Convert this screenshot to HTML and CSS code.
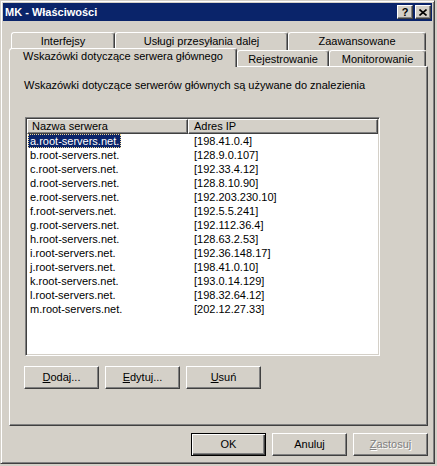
FILE: index.html
```html
<!DOCTYPE html>
<html lang="pl">
<head>
<meta charset="utf-8">
<title>MK - Właściwości</title>
<link rel="stylesheet" href="styles.css">
</head>
<body>
<div class="window">
  <div class="titlebar">
    <span class="title">MK - Właściwości</span>
    <div class="tbtns">
      <span class="tbtn help">?</span>
      <span class="tbtn close"><svg width="8" height="7" viewBox="0 0 8 7"><path d="M0.5 0.5 L7.5 6.5 M7.5 0.5 L0.5 6.5" stroke="#000" stroke-width="1.6" fill="none"/></svg></span>
    </div>
  </div>
  <div class="client">
    <div class="tabs">
      <div class="tabrow back">
        <div class="tab w1">Interfejsy</div>
        <div class="tab w2">Usługi przesyłania dalej</div>
        <div class="tab w3">Zaawansowane</div>
      </div>
      <div class="tabrow front">
        <div class="tab sel w4">Wskazówki dotyczące serwera głównego</div>
        <div class="tab w5">Rejestrowanie</div>
        <div class="tab w6">Monitorowanie</div>
      </div>
    </div>
    <div class="panel">
      <p class="desc">Wskazówki dotyczące serwerów głównych są używane do znalezienia</p>
      <div class="list">
        <div class="lhead">
          <div class="hcell c1">Nazwa serwera</div>
          <div class="hcell c2">Adres IP</div>
        </div>
        <div class="lbody">
          <div class="row selected"><div class="name"><span>a.root-servers.net.</span></div><div class="ip">[198.41.0.4]</div></div>
          <div class="row"><div class="name"><span>b.root-servers.net.</span></div><div class="ip">[128.9.0.107]</div></div>
          <div class="row"><div class="name"><span>c.root-servers.net.</span></div><div class="ip">[192.33.4.12]</div></div>
          <div class="row"><div class="name"><span>d.root-servers.net.</span></div><div class="ip">[128.8.10.90]</div></div>
          <div class="row"><div class="name"><span>e.root-servers.net.</span></div><div class="ip">[192.203.230.10]</div></div>
          <div class="row"><div class="name"><span>f.root-servers.net.</span></div><div class="ip">[192.5.5.241]</div></div>
          <div class="row"><div class="name"><span>g.root-servers.net.</span></div><div class="ip">[192.112.36.4]</div></div>
          <div class="row"><div class="name"><span>h.root-servers.net.</span></div><div class="ip">[128.63.2.53]</div></div>
          <div class="row"><div class="name"><span>i.root-servers.net.</span></div><div class="ip">[192.36.148.17]</div></div>
          <div class="row"><div class="name"><span>j.root-servers.net.</span></div><div class="ip">[198.41.0.10]</div></div>
          <div class="row"><div class="name"><span>k.root-servers.net.</span></div><div class="ip">[193.0.14.129]</div></div>
          <div class="row"><div class="name"><span>l.root-servers.net.</span></div><div class="ip">[198.32.64.12]</div></div>
          <div class="row"><div class="name"><span>m.root-servers.net.</span></div><div class="ip">[202.12.27.33]</div></div>
        </div>
      </div>
      <div class="btnrow">
        <div class="btn"><span><u>D</u>odaj...</span></div>
        <div class="btn"><span><u>E</u>dytuj...</span></div>
        <div class="btn"><span><u>U</u>suń</span></div>
      </div>
    </div>
    <div class="dlgbtns">
      <div class="btn default"><span>OK</span></div>
      <div class="btn"><span>Anuluj</span></div>
      <div class="btn disabled"><span><u>Z</u>astosuj</span></div>
    </div>
  </div>
</div>
</body>
</html>
```
FILE: styles.css
```css
* { box-sizing: border-box; }
html, body { margin: 0; padding: 0; }
body {
  background: #d4d0c8;
  font-family: "Liberation Sans", Arial, sans-serif;
  font-size: 11px;
  color: #000;
  width: 437px;
  height: 466px;
  overflow: hidden;
}
.window {
  width: 435px;
  height: 464px;
  border: 1px solid;
  border-color: #d4d0c8 #404040 #404040 #d4d0c8;
  box-shadow: inset 1px 1px #fff, inset -1px -1px #808080;
  padding: 2px;
  display: flex;
  flex-direction: column;
  background: #d4d0c8;
}
.titlebar {
  height: 18px;
  flex: none;
  background: #0a246a;
  display: flex;
  align-items: center;
  padding-left: 2px;
  color: #fff;
  font-weight: bold;
}
.title { flex: 1; line-height: 13px; }
.tbtns { display: flex; gap: 2px; margin-right: 1px; }
.tbtn {
  width: 16px;
  height: 14px;
  background: #d4d0c8;
  border: 1px solid;
  border-color: #fff #404040 #404040 #fff;
  box-shadow: inset -1px -1px #808080;
  display: flex;
  align-items: center;
  justify-content: center;
  color: #000;
  font-size: 11px;
  line-height: 11px;
}
.client {
  flex: 1;
  padding: 11px 4px 0 6px;
  display: flex;
  flex-direction: column;
}
.tabrow { display: flex; }
.back { height: 18px; margin-left: 2px; }
.front { height: 16px; align-items: flex-end; }
.tab {
  border: 1px solid;
  border-bottom: none;
  border-color: #fff #404040 transparent #fff;
  box-shadow: inset -1px 0 #808080;
  border-radius: 3px 3px 0 0;
  text-align: center;
  line-height: 13px;
  padding-top: 2px;
  white-space: nowrap;
  background: #d4d0c8;
}
.back .tab { height: 18px; }
.front .tab { height: 16px; }
.front .tab.sel {
  height: 19px;
  margin-bottom: -1px;
  padding-top: 1px;
  position: relative;
  z-index: 1;
}
.w1 { width: 104px; }
.w2 { width: 173px; }
.w3 { width: 138px; }
.w4 { width: 228px; }
.w5 { width: 92px; }
.w6 { width: 97px; }
.panel {
  width: 419px;
  height: 360px;
  flex: none;
  border: 1px solid;
  border-color: #fff #404040 #404040 #fff;
  box-shadow: inset -1px -1px #808080;
  padding: 12px 0 0 14px;
}
.desc { margin: 0; line-height: 13px; white-space: nowrap; }
.list {
  width: 355px;
  height: 239px;
  margin: 25px 0 0 1px;
  border: 1px solid;
  border-color: #808080 #fff #fff #808080;
  box-shadow: inset 1px 1px #404040, inset -1px -1px #d4d0c8;
  padding: 1px;
  background: #fff;
}
.lhead { display: flex; height: 15px; }
.hcell {
  height: 15px;
  border: 1px solid;
  border-color: #fff #404040 #404040 #fff;
  box-shadow: inset -1px -1px #808080;
  background: #d4d0c8;
  line-height: 13px;
  white-space: nowrap;
}
.c1 { width: 161px; padding-left: 4px; }
.c2 { width: 190px; padding-left: 5px; }
.row { display: flex; height: 14px; }
.name { width: 161px; padding-left: 1px; }
.name span {
  display: inline-block;
  height: 14px;
  line-height: 12px;
  padding: 0 1px;
  border: 1px solid transparent;
  white-space: nowrap;
}
.row.selected .name span {
  background: #0a246a;
  color: #fff;
  border: 1px dotted #f5db95;
}
.ip { padding-left: 6px; line-height: 14px; white-space: nowrap; }
.btnrow { display: flex; gap: 6px; margin-top: 10px; }
.btn {
  width: 75px;
  height: 23px;
  border: 1px solid;
  border-color: #fff #404040 #404040 #fff;
  box-shadow: inset -1px -1px #808080;
  background: #d4d0c8;
  display: flex;
  align-items: center;
  justify-content: center;
  line-height: 13px;
}
.btn.default {
  border-color: #000;
  box-shadow: inset 1px 1px #fff, inset -1px -1px #404040, inset -2px -2px #808080;
}
.btn.disabled { color: #808080; text-shadow: 1px 1px #fff; }
.dlgbtns {
  display: flex;
  justify-content: flex-end;
  gap: 6px;
  margin-top: 7px;
}
```
